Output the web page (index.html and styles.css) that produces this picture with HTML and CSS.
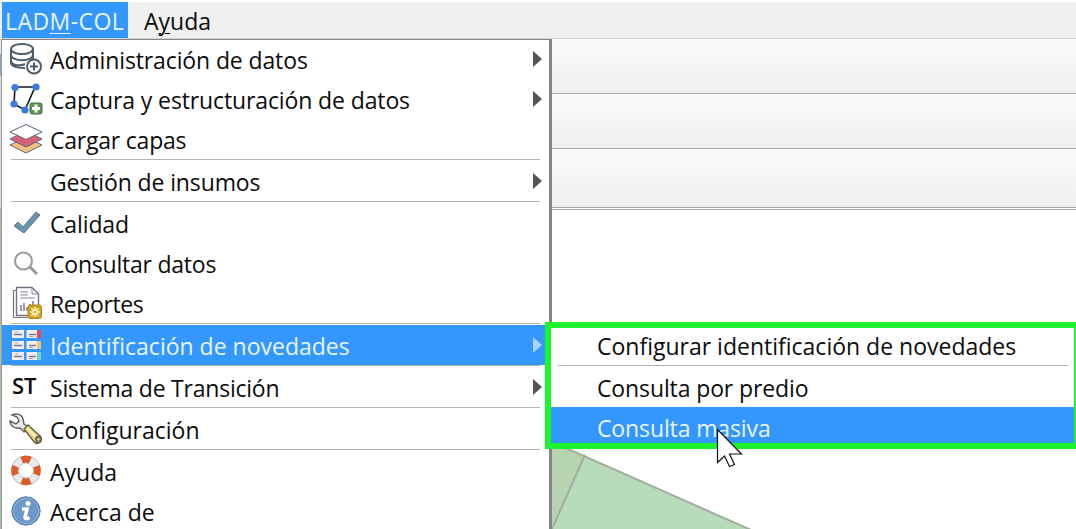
FILE: index.html
```html
<!DOCTYPE html>
<html lang="es">
<head>
<meta charset="utf-8">
<title>LADM-COL</title>
<link rel="stylesheet" href="styles.css">
</head>
<body>
<div class="app">
  <nav class="menubar">
    <span class="tab tab-active">LAD<u>M</u>-COL</span>
    <span class="tab tab-help">A<u>y</u>uda</span>
  </nav>
  <div class="toolbar"></div>
  <div class="toolbar"></div>
  <div class="toolbar toolbar-last"></div>
  <main class="canvas">
    <svg class="parcels" width="1076" height="319" viewBox="0 210 1076 319">
      <path d="M540 436L751 529H540Z" fill="#b8dbba"/>
      <path d="M550 442L585 456L552 529H550Z" fill="#b7d4b0"/>
      <path d="M550 441L751 530M585 455L552 529" fill="none" stroke="#a0afa0" stroke-width="2"/>
    </svg>
  </main>
</div>

<div class="edge"></div>
<div class="menu">
  <div class="item"><svg class="icon" viewBox="0 0 40 40"><g fill="none" stroke="#4e5c69" stroke-width="2"><ellipse cx="22" cy="10" rx="11" ry="5"/><path d="M11 10V24C11.500 28 17 29 25 29M33 10V20M11 16C11.500 23 32.500 23 33 16M11 22C12 27 21 27 25 25"/><circle cx="34" cy="27.500" r="7" fill="#fff"/><path d="M30 27.500H38M34 23.500V31.500"/></g></svg><span class="tight">Administración de datos</span><i class="arrow"></i></div>
  <div class="item"><svg class="icon" viewBox="0 0 40 40"><path d="M15 8L35 8L25 31L14 25Z" fill="none" stroke="#161616" stroke-width="1.600"/><g fill="#397be5"><circle cx="15" cy="8.500" r="3.600"/><circle cx="36" cy="8" r="3.600"/><circle cx="14" cy="25" r="3.600"/><circle cx="25" cy="31" r="3.600"/></g><rect x="30" y="24" width="12" height="11" rx="2" fill="#61945d" stroke="#456d42"/><path d="M36 25.500V33.500M32 29.500H40" stroke="#fff" stroke-width="3"/></svg><span class="tight">Captura y estructuración de datos</span><i class="arrow"></i></div>
  <div class="item"><svg class="icon" viewBox="0 0 40 40"><g stroke="#536779" stroke-width="1"><path d="M10 26L26 18L42 26L26 34Z" fill="#f6c27e"/><path d="M10 20L26 12L42 20L26 28Z" fill="#dd6176"/><path d="M10 13L26 5.500L42 13L26 20.500Z" fill="#fff"/></g></svg><span class="tighter">Cargar capas</span></div>
  <hr>
  <div class="item"><span class="icon"></span><span class="tight">Gestión de insumos</span><i class="arrow"></i></div>
  <hr>
  <div class="item"><svg class="icon" viewBox="0 0 40 40"><path d="M14 23L18 19L23 24L36 9L40 12L24 30Z" fill="#6794b2" stroke="#597485"/></svg><span class="tight">Calidad</span></div>
  <div class="item"><svg class="icon" viewBox="0 0 40 40"><circle cx="23.500" cy="18" r="8.500" fill="none" stroke="#999" stroke-width="2"/><path d="M30 24L37 31" stroke="#999" stroke-width="3"/></svg><span class="tighter">Consultar datos</span></div>
  <div class="item"><svg class="icon" viewBox="0 0 40 40"><path d="M16 7.500H13.500V34.500H36" fill="none" stroke="#777" stroke-width="1.200"/><path d="M16.500 4.500H32L38.500 11V32.500H16.500Z" fill="#fff" stroke="#737383" stroke-width="1.400"/><path d="M32 5V11H38M20 9H28M20 12H28M20 15H35" fill="none" stroke="#8585a2"/><path d="M21 28V22M24 28V20M27 28V24M30 28V21M33 28V18" stroke="#82719b" stroke-width="1.500"/><rect x="28" y="22" width="13.500" height="13.500" rx="2" fill="#d3a322" stroke="#ac8a28"/><path d="M35 24V34M30 29H40M31.500 25.500L38.500 32.500M38.500 25.500L31.500 32.500" stroke="#fff8c6" stroke-width="1.600"/><circle cx="35" cy="29" r="1.300" fill="#d3a322"/></svg><span class="tightest">Reportes</span></div>
  <hr>
  <div class="item selected"><svg class="icon" viewBox="0 0 40 40"><g fill="#f4edf2"><rect x="12" y="5" width="12" height="8"/><rect x="26.500" y="5" width="12" height="8"/><rect x="12" y="16" width="12" height="8"/><rect x="26.500" y="16" width="12" height="8"/><rect x="12" y="27" width="12" height="8"/><rect x="26.500" y="27" width="12" height="8"/></g><path d="M14 9.500H22M29 9.500H36M14 20.500H22M29 20.500H36M14 31.500H22M29 31.500H36" stroke="#777b94" stroke-width="1.500"/><path d="M15 7H18M29 11.500H33M15 18H18M29 22.500H33M15 29H18M29 33.500H33" stroke="#c39aaa"/><path d="M37 5H41V13H37Z" fill="#e34950"/><path d="M37 16H41V24H37Z" fill="#edc675"/><path d="M37 27H41V35H37Z" fill="#6bd8bd"/></svg><span>Identificación de novedades</span><i class="arrow"></i></div>
  <hr>
  <div class="item"><b class="icon st">ST</b><span class="tighter">Sistema de Transición</span><i class="arrow"></i></div>
  <hr>
  <div class="item"><svg class="icon" viewBox="0 0 40 40"><path d="M12 6C16 4 22 5 23 10L24 15L28 18L24 23L20 19C15 20 10 17 10 12L16 15L19 12L17 8Z" fill="#e9e9e6" stroke="#626260" stroke-width="1.400"/><path d="M24 20L28 16L40 27C43 30 39 36 35 34Z" fill="#e7d58a" stroke="#635d3c" stroke-width="1.300"/><path d="M28 20L36 28" stroke="#fff3ba" stroke-width="2"/><ellipse cx="38.500" cy="30.500" rx="3" ry="3.500" fill="#8b8554" stroke="#4c4a31"/><circle cx="38.500" cy="30.500" r="1" fill="#eee"/></svg><span>Configuración</span></div>
  <hr>
  <div class="item"><svg class="icon" viewBox="0 0 40 40"><circle cx="26" cy="19.500" r="14" fill="none" stroke="#b2b9bd" stroke-width="2"/><circle cx="26" cy="19.500" r="11.200" fill="none" stroke="#e7ebed" stroke-width="6"/><circle cx="26" cy="19.500" r="11.200" fill="none" stroke="#df5c26" stroke-width="7" pathLength="80" stroke-dasharray="10 10" stroke-dashoffset="5"/><circle cx="26" cy="19.500" r="7.500" fill="#fff" stroke="#bbb"/></svg><span>Ayuda</span></div>
  <div class="item"><svg class="icon" viewBox="0 0 40 40"><circle cx="26" cy="20" r="14.200" fill="#6b98c8" stroke="#537fae"/><circle cx="26" cy="20" r="12.700" fill="none" stroke="#8eb2d7"/><circle cx="28" cy="12.500" r="2.500" fill="#fff"/><path d="M22 18H27L25 26Q25 29 29.500 26.500" fill="none" stroke="#fff" stroke-width="3.500"/></svg><span>Acerca de</span></div>
</div>

<div class="submenu">
  <div class="subitem"><span>Configurar identificación de novedades</span></div>
  <hr>
  <div class="subitem"><span class="tight">Consulta por predio</span></div>
  <div class="subitem selected"><span class="tight">Consulta masiva</span></div>
</div>
<svg class="cursor" width="28" height="42" viewBox="0 0 28 42"><path d="M1.500 1.500V34.500L8.500 28L13.500 38.500L18.500 36.500L13.500 26H25.500Z" fill="#fff" stroke="#111" stroke-width="1.200"/></svg>
</body>
</html>
```
FILE: styles.css
```css
* { box-sizing: border-box; }
body {
  margin: 0;
  width: 1076px;
  height: 529px;
  position: relative;
  overflow: hidden;
  background: #fff;
  color: #0c0c0c;
  font: 23px/42px "Open Sans", "Noto Sans", sans-serif;
  white-space: nowrap;
}
.app { display: flex; flex-direction: column; height: 529px; }
.menubar {
  display: flex;
  height: 39px;
  padding-left: 2px;
  border-top: 2px solid #fff;
  border-bottom: 1px solid #d4d4d4;
  background: #f0f0f0;
  line-height: 38px;
}
.tab u { text-decoration-thickness: 1px; text-underline-offset: 3px; }
.tab-active { width: 126px; padding-left: 3px; background: #3497fd; color: #e8f5ff; letter-spacing: 0.45px; }
.tab-help { padding-left: 16px; }
.toolbar {
  height: 55px;
  border-bottom: 1px solid #aaa;
  background: linear-gradient(#fbfbfb, #efefef);
}
.toolbar-last { height: 61px; border-bottom: 3px double #a5a5a5; }
.canvas { flex: 1; overflow: hidden; }
.parcels { display: block; }
.edge {
  position: absolute;
  left: 0;
  top: 39px;
  width: 2px;
  height: 490px;
  background: linear-gradient(#e6e6e6 0 15px, #8ba6cc 15px 37px, #dedede 37px 169px, #a8bda3 169px);
}
.menu {
  position: absolute;
  left: 1px;
  top: 39px;
  width: 551px;
  height: 490px;
  overflow: hidden;
  border-left: 1px solid #999;
  border-right: 3px solid #858585;
  background: #fff;
  box-shadow: inset 0 1px #888;
}
.item { display: flex; height: 40px; padding-right: 4px; }
.icon { flex: none; width: 40px; height: 40px; margin-left: -2px; margin-right: 10px; overflow: visible; }
.st { padding-left: 12px; font: 600 22px/36px "Open Sans", sans-serif; }
.tight { letter-spacing: -0.12px; }
.tighter { letter-spacing: -0.22px; }
.tightest { letter-spacing: -0.4px; }
.arrow {
  width: 9px;
  height: 16px;
  margin: 12px 3px 0 auto;
  background: #555;
  clip-path: polygon(0 0, 100% 50%, 0 100%);
}
hr { height: 2px; margin: 0 8px 0 10px; border: 0; border-top: 1px solid #b4b4b4; }
.menu hr { margin: 0 9px 0 9px; }
.selected { background: #3497fd; color: #e8f5ff; }
.selected .arrow { background: #a8d3fb; }
.submenu {
  position: absolute;
  left: 545px;
  top: 322px;
  width: 531px;
  height: 127px;
  border: 6px solid #1cf52b;
  border-right-width: 2px;
  overflow: hidden;
  background: #fff;
}
.subitem { height: 40px; padding-left: 46px; }
.subitem:first-child { height: 37px; line-height: 36px; }
.submenu hr { margin: 0 6px 0 7px; }
.cursor { position: absolute; left: 716px; top: 428px; }
```
